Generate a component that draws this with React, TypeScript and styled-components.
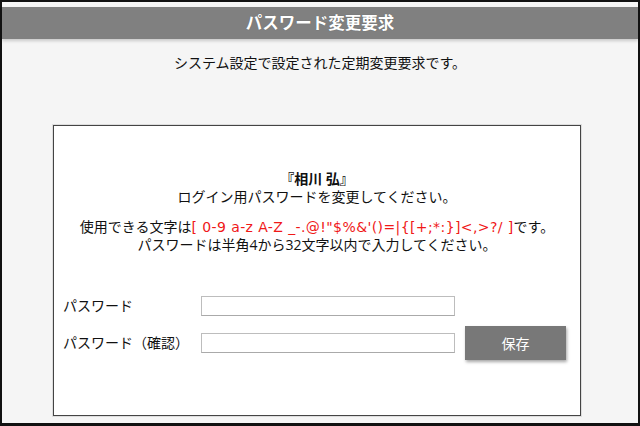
import styled, { createGlobalStyle } from "styled-components";

const GlobalStyle = createGlobalStyle`
  *, *::before, *::after { box-sizing: border-box; }
  html, body { margin: 0; padding: 0; background: #fff; }
  body {
    font-family: "Open Sans", "Noto Sans CJK JP", sans-serif;
    color: #222;
  }
`;

const Frame = styled.div`
  width: 640px;
  height: 426px;
  border: 2px solid #111;
  border-bottom-width: 3px;
  background: #f5f5f5;
  padding-top: 5px;
  overflow: hidden;
`;

const Header = styled.header`
  height: 32px;
  background: #808080;
  box-shadow: 0 2px 3px rgba(0, 0, 0, 0.18);
  display: flex;
  align-items: center;
  justify-content: center;
`;

const Title = styled.h1`
  margin: 0;
  font-size: 16.5px;
  font-weight: 700;
  color: #fff;
  line-height: 20px;
  text-shadow: 0 0 1px rgba(0, 0, 0, 0.3);
`;

const Notice = styled.p`
  margin: 14px 0 0;
  font-size: 14px;
  line-height: 20px;
  text-align: center;
  color: #111;
`;

const Panel = styled.section`
  width: 528px;
  height: 291px;
  margin: 52px 0 0 51px;
  background: #fff;
  border: 1.5px solid #444;
  box-shadow: 0 0 0 1px #ddd;
  padding: 44px 0 0 9px;
`;

const Message = styled.div`
  padding-right: 9px;
  font-size: 14px;
  line-height: 18px;
  text-align: center;
  color: #111;
`;

const Line = styled.div<{ $gap?: number; $bold?: boolean }>`
  margin-top: ${({ $gap }) => $gap ?? 0}px;
  font-weight: ${({ $bold }) => ($bold ? 700 : 400)};
`;

const Allowed = styled.span`
  color: #f01818;
  font-family: "DejaVu Sans", "Noto Sans CJK JP", sans-serif;
  font-size: 14px;
  letter-spacing: 0.4px;
`;

const Form = styled.div`
  margin-top: 42px;
  display: grid;
  grid-template-columns: 138px 254px 111px;
  grid-template-rows: 20px 34px;
  row-gap: 10px;
  align-items: center;
`;

const Label = styled.label`
  font-size: 14px;
  line-height: 18px;
  color: #111;
`;

const Field = styled.input`
  width: 254px;
  height: 20px;
  border: 1px solid #bdbdbd;
  border-bottom-color: #aaa;
  background: #fff;
  padding: 0 4px;
  font-size: 13px;
  outline: none;
`;

const SaveButton = styled.button`
  height: 34px;
  width: 101px;
  margin-left: 10px;
  border: none;
  background: #787878;
  color: #fff;
  font-family: inherit;
  font-size: 14px;
  box-shadow: 1px 2px 3px rgba(0, 0, 0, 0.35);
  cursor: pointer;
`;

export default function App() {
  return (
    <>
      <GlobalStyle />
      <Frame>
        <Header>
          <Title>パスワード変更要求</Title>
        </Header>
        <Notice>システム設定で設定された定期変更要求です。</Notice>
        <Panel>
          <Message>
            <Line $bold>『相川 弘』</Line>
            <Line>ログイン用パスワードを変更してください。</Line>
            <Line $gap={12}>
              使用できる文字は
              <Allowed>[ 0-9 a-z A-Z _-.@!"$%&amp;'()=|{"{"}[+;*:{"}"}]&lt;,&gt;?/ ]</Allowed>
              です。
            </Line>
            <Line>パスワードは半角4から32文字以内で入力してください。</Line>
          </Message>
          <Form>
            <Label htmlFor="pw">パスワード</Label>
            <Field id="pw" type="password" />
            <span />
            <Label htmlFor="pw2">パスワード（確認）</Label>
            <Field id="pw2" type="password" />
            <SaveButton type="button">保存</SaveButton>
          </Form>
        </Panel>
      </Frame>
    </>
  );
}
